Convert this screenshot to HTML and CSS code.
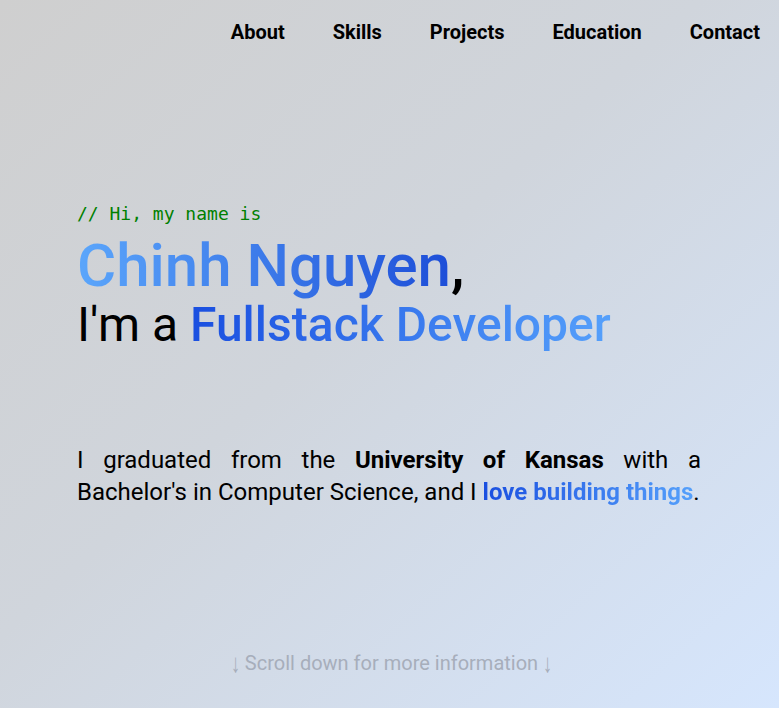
FILE: index.html
```html
<!DOCTYPE html>
<html lang="en">
<head>
<meta charset="utf-8">
<title>Chinh Nguyen</title>
<link rel="stylesheet" href="styles.css">
</head>
<body>
<div class="page">
  <nav class="nav">
    <a href="#about">About</a>
    <a href="#skills">Skills</a>
    <a href="#projects">Projects</a>
    <a href="#education">Education</a>
    <a href="#contact">Contact</a>
  </nav>
  <main class="hero">
    <p class="comment">// Hi, my name is</p>
    <h1 class="name"><span class="grad-light">Chinh Nguyen</span>,</h1>
    <h2 class="role">I'm a <span class="grad-dark">Fullstack Developer</span></h2>
    <p class="intro">I graduated from the <strong>University of Kansas</strong> with a Bachelor's in Computer Science, and I <strong class="grad-dark">love building things</strong>.</p>
  </main>
  <div class="scroll"><span class="arrow">↓</span> Scroll down for more information <span class="arrow">↓</span></div>
</div>
</body>
</html>
```

FILE: styles.css
```css
* { box-sizing: border-box; }
html, body { margin: 0; padding: 0; }
body {
  font-family: Roboto, "Liberation Sans", sans-serif;
  color: #000;
}
.page {
  height: 708px;
  background: linear-gradient(to bottom right, #cfcfcf 0%, #d0d5dc 45%, #d6e6fd 100%);
  display: flex;
  flex-direction: column;
}
.nav {
  display: flex;
  justify-content: flex-end;
  gap: 48px;
  padding: 20px 19px 0 0;
}
.nav a {
  font-size: 20px;
  font-weight: 700;
  color: #000;
  text-decoration: none;
  line-height: 24px;
}
.hero {
  padding: 0 0 0 77px;
  width: 701px;
  margin-top: 158px;
}
.comment {
  margin: 0;
  font-family: "DejaVu Sans Mono", monospace;
  font-size: 18px;
  line-height: 24px;
  color: #008000;
}
.name {
  margin: 0;
  font-size: 60px;
  font-weight: 500;
  line-height: 80px;
  color: #000;
}
.role {
  margin: 0;
  font-size: 48px;
  font-weight: 400;
  line-height: 38px;
}
.role .grad-dark { font-weight: 500; }
.grad-light {
  background: linear-gradient(to right, #5ba6fb, #1d4ed8);
  -webkit-background-clip: text;
  background-clip: text;
  color: transparent;
}
.grad-dark {
  background: linear-gradient(to right, #1a4fe0, #55a0fb);
  -webkit-background-clip: text;
  background-clip: text;
  color: transparent;
}
.intro {
  margin: 100px 0 0;
  font-size: 24px;
  line-height: 32px;
  text-align: justify;
}
.scroll {
  margin-top: auto;
  margin-bottom: 33px;
  text-align: center;
  font-size: 20px;
  line-height: 24px;
  color: #a7aebb;
  padding-left: 4px;
}
.arrow {
  display: inline-block;
  font-family: "Noto Sans", sans-serif;
  font-size: 26px;
  line-height: 24px;
  transform: scaleX(0.7) translateY(2px);
  margin: 0 -2px;
}
```
